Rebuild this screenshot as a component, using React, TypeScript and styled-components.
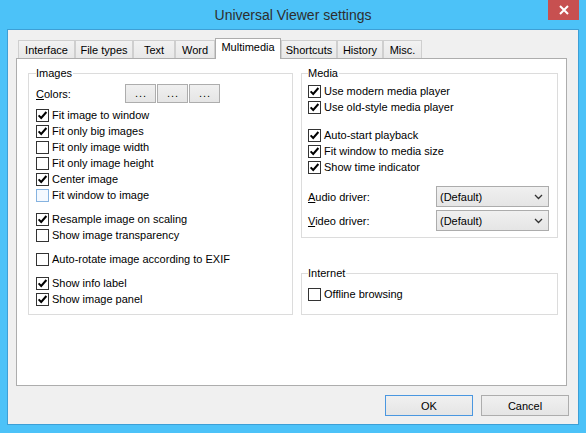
import React from 'react';
import styled, { createGlobalStyle } from 'styled-components';

const GlobalStyle = createGlobalStyle`
  html, body {
    margin: 0;
    padding: 0;
  }
  body {
    font-family: "Liberation Sans", Arial, sans-serif;
    font-size: 11px;
    color: #000;
  }
`;

type CheckItem = {
  label: string;
  checked: boolean;
  hot?: boolean;
  gap?: number;
};

const tabs = [
  { name: 'Interface', width: 57 },
  { name: 'File types', width: 58 },
  { name: 'Text', width: 42 },
  { name: 'Word', width: 40 },
  { name: 'Multimedia', width: 66, active: true },
  { name: 'Shortcuts', width: 56 },
  { name: 'History', width: 46 },
  { name: 'Misc.', width: 39 },
];

const imageOptions: CheckItem[] = [
  { label: 'Fit image to window', checked: true },
  { label: 'Fit only big images', checked: true },
  { label: 'Fit only image width', checked: false },
  { label: 'Fit only image height', checked: false },
  { label: 'Center image', checked: true },
  { label: 'Fit window to image', checked: false, hot: true },
  { label: 'Resample image on scaling', checked: true, gap: 8 },
  { label: 'Show image transparency', checked: false },
  { label: 'Auto-rotate image according to EXIF', checked: false, gap: 8 },
  { label: 'Show info label', checked: true, gap: 8 },
  { label: 'Show image panel', checked: true },
];

const mediaOptions: CheckItem[] = [
  { label: 'Use modern media player', checked: true },
  { label: 'Use old-style media player', checked: true },
  { label: 'Auto-start playback', checked: true, gap: 12 },
  { label: 'Fit window to media size', checked: true },
  { label: 'Show time indicator', checked: true },
];

const CheckBox = ({ item }: { item: CheckItem }) => (
  <CheckRow gap={item.gap}>
    <Box hot={item.hot}>
      {item.checked && (
        <svg width="11" height="11" viewBox="0 0 11 11">
          <path d="M1.6 5.4 L4.2 8 L9.4 2" fill="none" stroke="#000" strokeWidth="2" />
        </svg>
      )}
    </Box>
    <span>{item.label}</span>
  </CheckRow>
);

const Chevron = () => (
  <svg width="9" height="6" viewBox="0 0 9 6">
    <path d="M1 1 L4.5 4.5 L8 1" fill="none" stroke="#333" strokeWidth="1.3" />
  </svg>
);

const App = () => (
  <>
    <GlobalStyle />
    <Frame>
      <TitleBar>
        <span />
        <Title>Universal Viewer settings</Title>
        <CloseButton>
          <svg width="10" height="10" viewBox="0 0 10 10">
            <path d="M1 1 L9 9 M9 1 L1 9" stroke="#fff" strokeWidth="2" />
          </svg>
        </CloseButton>
      </TitleBar>
      <Client>
        <TabStrip>
          {tabs.map((t) => (
            <Tab key={t.name} width={t.width} active={t.active}>
              {t.name}
            </Tab>
          ))}
        </TabStrip>
        <Panel>
          <Group width={265} padX={7} padTop={4} padBottom={7}>
            <Legend>Images</Legend>
            <ColorsRow>
              <Label width={89}>
                <u>C</u>olors:
              </Label>
              <DotsGroup>
                <DotsButton>...</DotsButton>
                <DotsButton>...</DotsButton>
                <DotsButton>...</DotsButton>
              </DotsGroup>
            </ColorsRow>
            {imageOptions.map((o) => (
              <CheckBox key={o.label} item={o} />
            ))}
          </Group>
          <RightColumn>
            <Group width={257} padX={6} padTop={3} padBottom={6}>
              <Legend>Media</Legend>
              {mediaOptions.map((o) => (
                <CheckBox key={o.label} item={o} />
              ))}
              <SelectRow gap={11}>
                <Label width={128}>
                  <u>A</u>udio driver:
                </Label>
                <Select>
                  <span>(Default)</span>
                  <Chevron />
                </Select>
              </SelectRow>
              <SelectRow gap={3}>
                <Label width={128}>
                  <u>V</u>ideo driver:
                </Label>
                <Select>
                  <span>(Default)</span>
                  <Chevron />
                </Select>
              </SelectRow>
            </Group>
            <Group width={257} padX={6} padTop={6} padBottom={12} spaced>
              <Legend>Internet</Legend>
              <CheckBox item={{ label: 'Offline browsing', checked: false }} />
            </Group>
          </RightColumn>
        </Panel>
        <Footer>
          <DialogButton primary>OK</DialogButton>
          <DialogButton>Cancel</DialogButton>
        </Footer>
      </Client>
    </Frame>
  </>
);

const Frame = styled.div`
  width: 586px;
  height: 433px;
  box-sizing: border-box;
  padding: 0 7px 8px 7px;
  background: #4cc2f8;
  display: flex;
  flex-direction: column;
`;

const TitleBar = styled.div`
  height: 29px;
  display: grid;
  grid-template-columns: 1fr auto 1fr;
  align-items: center;
`;

const Title = styled.div`
  font-size: 14px;
  color: #2e2e2e;
  padding-top: 1px;
`;

const CloseButton = styled.div`
  justify-self: end;
  align-self: start;
  width: 31px;
  height: 20px;
  background: #c75050;
  display: flex;
  align-items: center;
  justify-content: center;
`;

const Client = styled.div`
  flex: 1;
  background: #f0f0f0;
  border: 1px solid #3d9fd6;
  padding: 8px 0 8px 0;
  display: flex;
  flex-direction: column;
`;

const TabStrip = styled.div`
  display: flex;
  align-items: flex-end;
  height: 20px;
  margin-left: 10px;
`;

const Tab = styled.div<{ width: number; active?: boolean }>`
  width: ${(p) => p.width}px;
  height: ${(p) => (p.active ? 21 : 18)}px;
  margin-bottom: ${(p) => (p.active ? -1 : 0)}px;
  box-sizing: border-box;
  border: 1px solid ${(p) => (p.active ? '#acacac' : '#cfcfcf')};
  border-bottom: none;
  background: ${(p) => (p.active ? '#fff' : 'linear-gradient(#f2f2f2, #e8e8e8)')};
  padding-top: ${(p) => (p.active ? 1 : 2)}px;
  line-height: 14px;
  text-align: center;
  white-space: nowrap;
  position: relative;
  z-index: ${(p) => (p.active ? 2 : 1)};
`;

const Panel = styled.div`
  margin-left: 8px;
  width: 551px;
  height: 328px;
  box-sizing: border-box;
  border: 1px solid #adadad;
  background: #fff;
  padding: 7px 0 0 11px;
  display: flex;
  align-items: flex-start;
  gap: 8px;
`;

const RightColumn = styled.div`
  display: flex;
  flex-direction: column;
`;

const Group = styled.fieldset<{
  width: number;
  padX: number;
  padTop: number;
  padBottom: number;
  spaced?: boolean;
}>`
  margin: ${(p) => (p.spaced ? 28 : 0)}px 0 0 0;
  width: ${(p) => p.width}px;
  box-sizing: border-box;
  min-width: 0;
  border: 1px solid #dcdcdc;
  padding: ${(p) => p.padTop}px ${(p) => p.padX}px ${(p) => p.padBottom}px;
`;

const Legend = styled.legend`
  padding: 0 1px 0 0;
  line-height: 14px;
`;

const ColorsRow = styled.div`
  display: flex;
  align-items: center;
  height: 19px;
  margin-bottom: 4px;
`;

const Label = styled.span<{ width: number }>`
  width: ${(p) => p.width}px;
  flex-shrink: 0;
`;

const DotsGroup = styled.div`
  display: flex;
  gap: 1px;
`;

const DotsButton = styled.div`
  width: 31px;
  height: 19px;
  box-sizing: border-box;
  border: 1px solid #adadad;
  background: linear-gradient(#f0f0f0, #e5e5e5);
  text-align: center;
  line-height: 17px;
  letter-spacing: 1px;
  padding-left: 1px;
`;

const CheckRow = styled.div<{ gap?: number }>`
  display: flex;
  align-items: center;
  gap: 3px;
  height: 16px;
  margin-top: ${(p) => p.gap || 0}px;
  white-space: nowrap;
`;

const Box = styled.div<{ hot?: boolean }>`
  width: 13px;
  height: 13px;
  box-sizing: border-box;
  border: 1px solid ${(p) => (p.hot ? '#86b3e0' : '#333')};
  background: ${(p) => (p.hot ? '#f4f9ff' : '#fff')};
  display: flex;
  align-items: center;
  justify-content: center;
  flex-shrink: 0;
`;

const SelectRow = styled.div<{ gap: number }>`
  display: flex;
  align-items: center;
  height: 21px;
  margin-top: ${(p) => p.gap}px;
`;

const Select = styled.div`
  width: 113px;
  height: 21px;
  box-sizing: border-box;
  border: 1px solid #acacac;
  background: linear-gradient(#f0f0f0, #e5e5e5);
  display: flex;
  align-items: center;
  justify-content: space-between;
  padding: 0 5px 0 3px;
`;

const Footer = styled.div`
  display: flex;
  justify-content: flex-end;
  gap: 8px;
  margin-top: 9px;
  padding-right: 9px;
`;

const DialogButton = styled.div<{ primary?: boolean }>`
  width: 88px;
  height: 21px;
  box-sizing: border-box;
  border: 1px solid ${(p) => (p.primary ? '#4a97e0' : '#adadad')};
  background: linear-gradient(#f0f0f0, #e5e5e5);
  display: flex;
  align-items: center;
  justify-content: center;
`;

export default App;
